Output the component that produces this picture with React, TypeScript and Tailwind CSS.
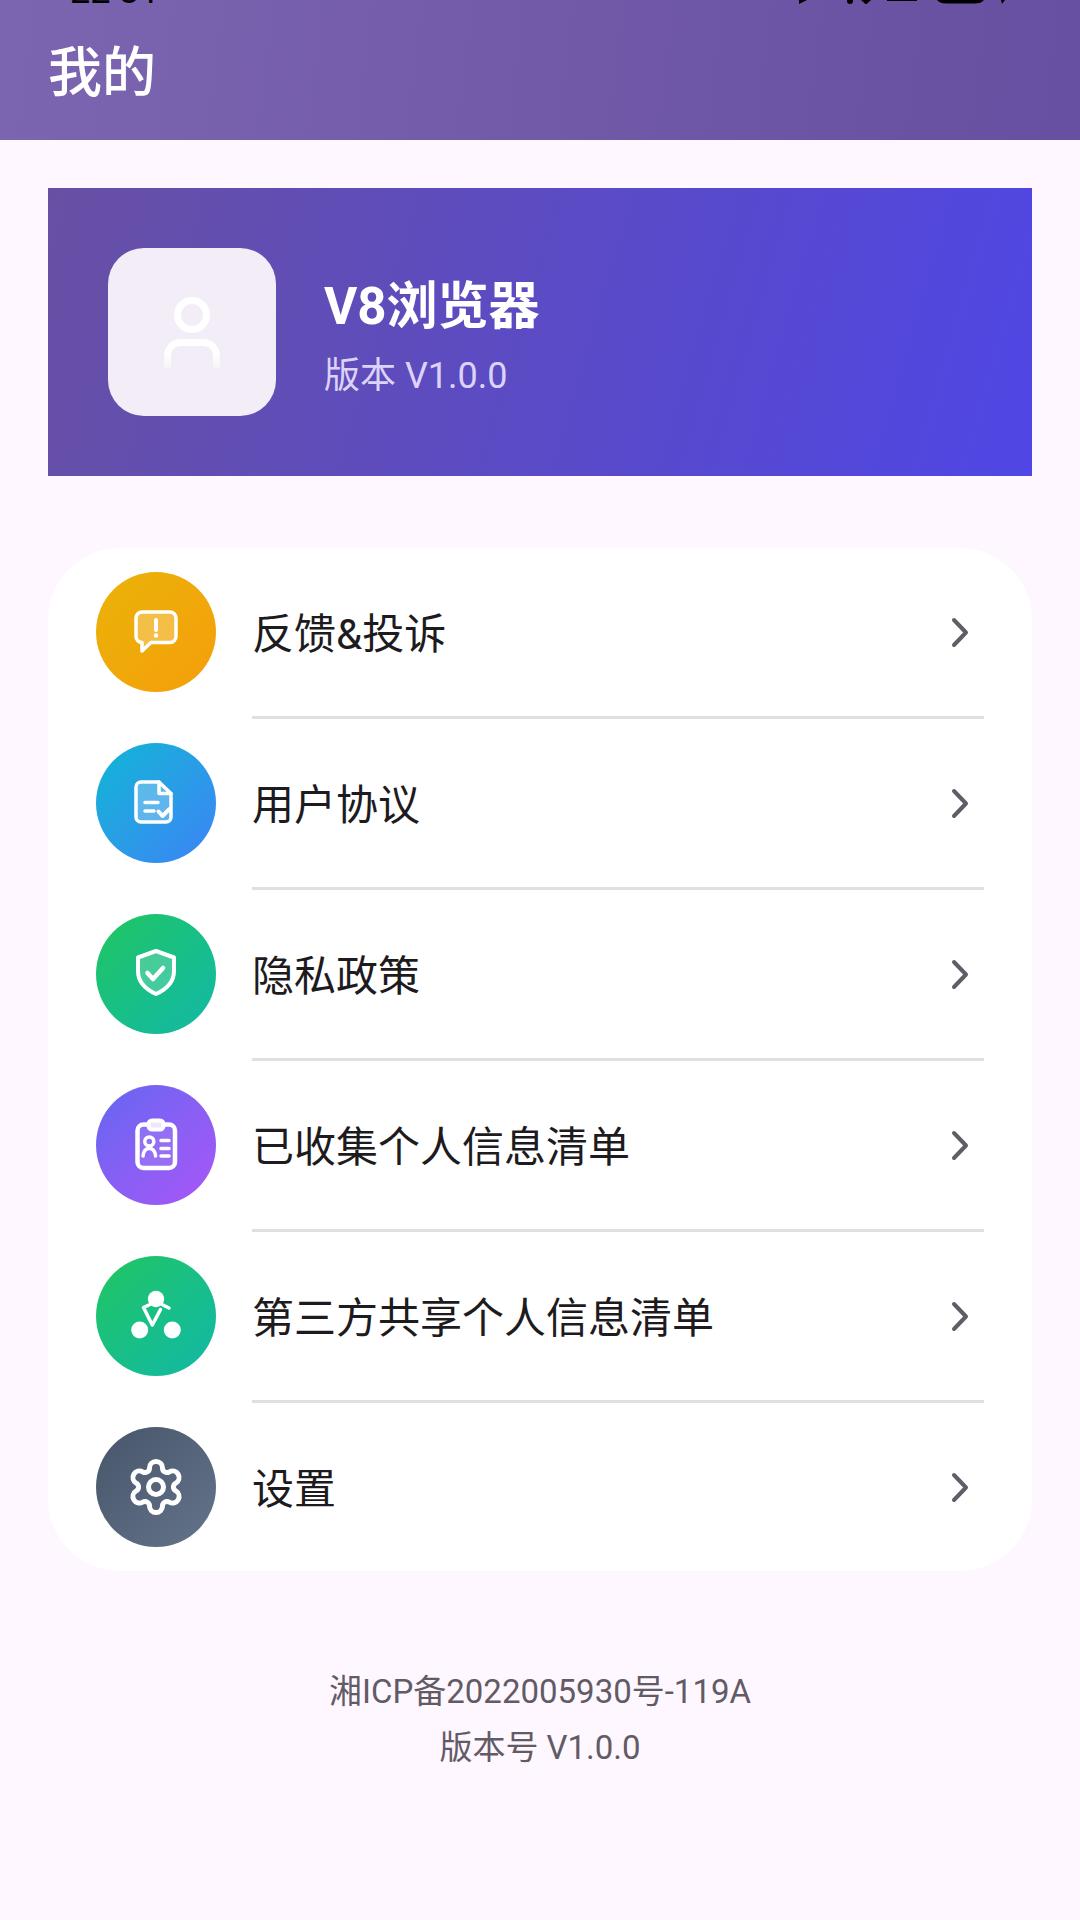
import { ReactNode } from 'react';
import { clsx } from 'clsx';

interface MenuItem {
  label: string;
  background: string;
  icon: ReactNode;
}

const menuItems: MenuItem[] = [
  {
    label: '反馈&投诉',
    background: 'from-[#eab308] to-[#f59e0b]',
    icon: (
      <>
        <path
          d="M16 10H44A6 6 0 0 1 50 16V34.5A6 6 0 0 1 44 40.5H25L16 49V40.5A6 6 0 0 1 10 34.5V16A6 6 0 0 1 16 10Z"
          fill="white"
          fillOpacity="0.25"
        />
        <path d="M30 18V28" strokeWidth="4" />
        <path d="M30 33.5V33.6" strokeWidth="4.5" />
      </>
    ),
  },
  {
    label: '用户协议',
    background: 'from-[#06b6d4] to-[#3b82f6]',
    icon: (
      <>
        <path
          d="M33 9H15A5 5 0 0 0 10 14V44A5 5 0 0 0 15 49H40A5 5 0 0 0 45 44V20.5Z"
          fill="white"
          fillOpacity="0.25"
        />
        <path d="M33 9V20.5H45" />
        <path d="M19 29.5H32M19 38H28" />
        <path d="M32.5 38.5L36.5 43L43.5 36" strokeWidth="4" />
      </>
    ),
  },
  {
    label: '隐私政策',
    background: 'from-[#22c55e] to-[#14b8a6]',
    icon: (
      <>
        <path
          d="M30 7L12 13.5V27C12 38 20 45.5 30 50C40 45.5 48 38 48 27V13.5Z"
          fill="white"
          fillOpacity="0.2"
          strokeWidth="4"
        />
        <path d="M21.5 29L27 35L37 24" strokeWidth="4.5" />
      </>
    ),
  },
  {
    label: '已收集个人信息清单',
    background: 'from-[#6366f1] to-[#a855f7]',
    icon: (
      <>
        <rect x="11.5" y="9.5" width="37.5" height="43.5" rx="6" fill="white" fillOpacity="0.1" strokeWidth="4.5" />
        <rect x="22.5" y="5.5" width="15" height="9" rx="3.5" fill="#efe6fd" strokeWidth="4" />
        <circle cx="23.3" cy="26.5" r="4.5" />
        <path d="M17 41C17.5 36 20 33.5 23.3 33.5C26.6 33.5 29 36 29.6 41" />
        <path d="M35 25.5H43M35 33.5H43M35 41H43" />
      </>
    ),
  },
  {
    label: '第三方共享个人信息清单',
    background: 'from-[#22c55e] to-[#14b8a6]',
    icon: (
      <>
        <circle cx="30" cy="13" r="8.2" fill="white" stroke="none" />
        <circle cx="13.7" cy="44" r="8.5" fill="white" stroke="none" />
        <circle cx="46.3" cy="44" r="8.5" fill="white" stroke="none" />
        <path d="M25 18L17.5 21.5L26.3 39L34.5 23.5M36 18.5L43 22" />
      </>
    ),
  },
  {
    label: '设置',
    background: 'from-[#475569] to-[#64748b]',
    icon: (
      <>
        <path
          strokeWidth="5"
          d="M23.5 10.9A6.5 6.5 0 0 1 36.5 10.9A4.4 4.4 0 0 0 43.3 14.8A6.5 6.5 0 0 1 49.8 26.1A4.4 4.4 0 0 0 49.8 33.9A6.5 6.5 0 0 1 43.3 45.2A4.4 4.4 0 0 0 36.5 49.1A6.5 6.5 0 0 1 23.5 49.1A4.4 4.4 0 0 0 16.7 45.2A6.5 6.5 0 0 1 10.2 33.9A4.4 4.4 0 0 0 10.2 26.1A6.5 6.5 0 0 1 16.7 14.8A4.4 4.4 0 0 0 23.5 10.9Z"
        />
        <circle cx="30" cy="30" r="7.5" strokeWidth="5" />
      </>
    ),
  },
];

const StatusBar = () => (
  <div className="flex h-1 items-end justify-between overflow-hidden pr-[72px] pl-[70px] text-black">
    <span className="text-[36px] leading-[26px]">
      22<span className="align-[6px] leading-none">:</span>31
    </span>
    <svg className="h-1 w-[210px]" viewBox="0 0 210 4" fill="currentColor" aria-hidden="true">
      <path d="M1 0H9L1 4Z" />
      <circle cx="52" cy="1" r="3" />
      <path d="M63 0H73L68 4.5Z" />
      <rect x="89" y="0" width="30" height="1" />
      <path d="M139 0H186Q183 3.5 177 3.5H148Q142 3.5 139 0Z" />
      <path d="M203 0H207L204 4Z" />
    </svg>
  </div>
);

const ProfileCard = () => (
  <section className="flex items-center gap-12 bg-[linear-gradient(106deg,#6750a4,#4f46e5)] p-[60px]">
    <div className="flex size-[168px] shrink-0 items-center justify-center rounded-[36px] bg-[#f3edf7]">
      <svg className="size-[72px]" viewBox="0 0 72 72" fill="none" strokeWidth="7" aria-hidden="true">
        <defs>
          <linearGradient id="shoulders" gradientUnits="userSpaceOnUse" x1="0" y1="58" x2="0" y2="75">
            <stop offset="0" stopColor="white" />
            <stop offset="1" stopColor="white" stopOpacity="0.2" />
          </linearGradient>
        </defs>
        <circle cx="36" cy="19" r="14.5" stroke="white" />
        <path
          d="M11.5 72V61C11.5 52 17 46.5 25 46.5H47C55 46.5 60.5 52 60.5 61V72"
          stroke="url(#shoulders)"
        />
      </svg>
    </div>
    <div className="flex flex-col gap-2 pt-2 text-white">
      <h2 className="text-[51px] leading-[72px] font-bold">V8浏览器</h2>
      <p className="text-[36px] leading-[50px] text-[#dcd4f8]">版本 V1.0.0</p>
    </div>
  </section>
);

const MenuRow = ({ label, background, icon, last }: MenuItem & { last: boolean }) => (
  <li>
    <button type="button" className="flex w-full items-center gap-9 px-12 py-6 text-left">
      <span
        className={clsx(
          'flex size-[120px] shrink-0 items-center justify-center rounded-full bg-linear-135',
          background
        )}
      >
        <svg
          className="size-[60px]"
          viewBox="0 0 60 60"
          fill="none"
          stroke="white"
          strokeWidth="3.5"
          strokeLinecap="round"
          strokeLinejoin="round"
          aria-hidden="true"
        >
          {icon}
        </svg>
      </span>
      <span className="flex-1 pt-1.5 text-[42px] leading-[60px] text-[#1d1b20]">{label}</span>
      <svg
        className="size-12 shrink-0"
        viewBox="0 0 48 48"
        fill="none"
        stroke="#605d66"
        strokeWidth="4"
        strokeLinecap="round"
        strokeLinejoin="round"
        aria-hidden="true"
      >
        <path d="M18 12L30 24.5L18 37" />
      </svg>
    </button>
    {!last && <div className="mr-12 ml-[204px] h-[3px] bg-[#e0e0e0]" />}
  </li>
);

const App = () => {
  return (
    <div className="min-h-screen bg-[#fef7ff] font-['Roboto','Noto_Sans_CJK_SC',sans-serif]">
      <header className="bg-[linear-gradient(97deg,#7c65b0,#674fa1)]">
        <StatusBar />
        <h1 className="px-12 pt-8 pb-7 text-[54px] leading-[76px] font-medium text-white">我的</h1>
      </header>

      <main className="flex flex-col px-12 pt-12">
        <ProfileCard />

        <ul className="mt-[72px] rounded-[72px] bg-white">
          {menuItems.map((item, index) => (
            <MenuRow key={item.label} {...item} last={index === menuItems.length - 1} />
          ))}
        </ul>

        <footer className="pt-[93px] pb-12 text-center text-[33px] leading-[56px] text-[#625b66]">
          <p>湘ICP备2022005930号-119A</p>
          <p>版本号 V1.0.0</p>
        </footer>
      </main>
    </div>
  );
};

export default App;
